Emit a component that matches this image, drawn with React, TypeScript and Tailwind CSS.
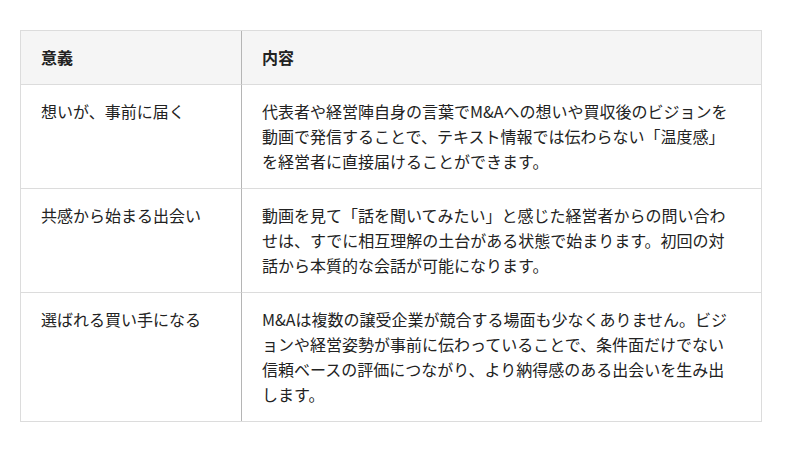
import React from "react";

const rows = [
  {
    title: "想いが、事前に届く",
    body: "代表者や経営陣自身の言葉でM&Aへの想いや買収後のビジョンを動画で発信することで、テキスト情報では伝わらない「温度感」を経営者に直接届けることができます。",
  },
  {
    title: "共感から始まる出会い",
    body: "動画を見て「話を聞いてみたい」と感じた経営者からの問い合わせは、すでに相互理解の土台がある状態で始まります。初回の対話から本質的な会話が可能になります。",
  },
  {
    title: "選ばれる買い手になる",
    body: "M&Aは複数の譲受企業が競合する場面も少なくありません。ビジョンや経営姿勢が事前に伝わっていることで、条件面だけでない信頼ベースの評価につながり、より納得感のある出会いを生み出します。",
  },
];

export default function App() {
  return (
    <div className="w-[800px] h-[452px] bg-white pt-[30px] pl-5 text-[16px] leading-[25px] text-[#222] font-['Noto_Sans_CJK_JP',sans-serif]">
      <div className="w-[742px] border border-[#dcdcdc] grid grid-cols-[220px_1fr]">
        {/* header */}
        <div className="bg-[#f5f5f5] px-5 py-3.5 font-bold border-b border-[#dcdcdc]">意義</div>
        <div className="bg-[#f5f5f5] pl-5 pr-7 py-3.5 font-bold border-b border-l border-b-[#dcdcdc] border-l-[#b5b5b5]">
          内容
        </div>
        {rows.map((r, i) => (
          <React.Fragment key={r.title}>
            <div
              className={
                i < rows.length - 1
                  ? "px-5 py-3.5 border-b border-[#dcdcdc]"
                  : "px-5 py-3.5"
              }
            >
              {r.title}
            </div>
            <div
              className={
                i < rows.length - 1
                  ? "pl-5 pr-7 py-3.5 border-l border-b border-b-[#dcdcdc] border-l-[#b5b5b5]"
                  : "pl-5 pr-7 py-3.5 border-l border-l-[#b5b5b5]"
              }
            >
              {r.body}
            </div>
          </React.Fragment>
        ))}
      </div>
    </div>
  );
}
